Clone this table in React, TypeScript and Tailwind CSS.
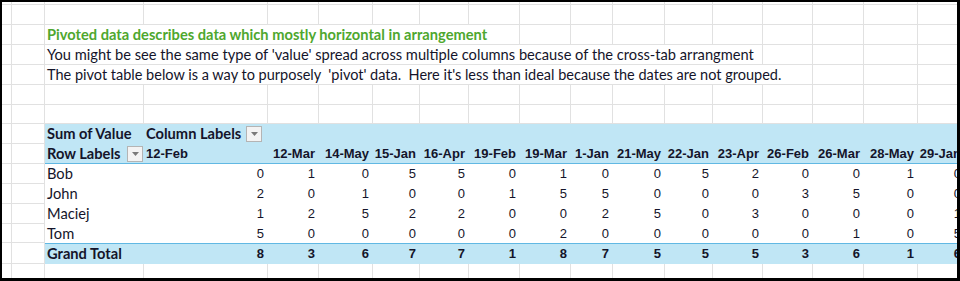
import React from "react";

const W = [10, 33, 99, 124, 51, 54, 47, 49, 51, 51, 42, 52, 48, 50, 50, 51, 54, 47];

const dates = ["12-Feb", "12-Mar", "14-May", "15-Jan", "16-Apr", "19-Feb", "19-Mar", "1-Jan", "21-May", "22-Jan", "23-Apr", "26-Feb", "26-Mar", "28-May", "29-Jan"];
const rows: [string, number[]][] = [
  ["Bob", [0, 1, 0, 5, 5, 0, 1, 0, 0, 5, 2, 0, 0, 1, 0]],
  ["John", [2, 0, 1, 0, 0, 1, 5, 5, 0, 0, 0, 3, 5, 0, 0]],
  ["Maciej", [1, 2, 5, 2, 2, 0, 0, 2, 5, 0, 3, 0, 0, 0, 1]],
  ["Tom", [5, 0, 0, 0, 0, 0, 2, 0, 0, 0, 0, 0, 1, 0, 5]],
];
const totals = [8, 3, 6, 7, 7, 1, 8, 7, 5, 5, 5, 3, 6, 1, 6];

const sumW = (a: number, b: number) => W.slice(a, b).reduce((s, x) => s + x, 0);

function GridCell({ w, h, children, className = "" }: { w: number; h: number; children?: React.ReactNode; className?: string }) {
  return (
    <div
      className={`shrink-0 border-r border-b border-[#e1e1e1] overflow-visible whitespace-pre ${className}`}
      style={{ width: w, height: h }}
    >
      {children}
    </div>
  );
}

function BlankRow({ h }: { h: number }) {
  return (
    <div className="flex">
      {W.map((w, i) => (
        <GridCell key={i} w={w} h={h} />
      ))}
    </div>
  );
}

function TextRow({ h, span, children, className = "" }: { h: number; span: number; children: React.ReactNode; className?: string }) {
  return (
    <div className="flex">
      <GridCell w={W[0]} h={h} />
      <GridCell w={W[1]} h={h} />
      <GridCell w={sumW(2, span)} h={h} className={`flex items-center pl-[2px] ${className}`}>
        {children}
      </GridCell>
      {W.slice(span).map((w, i) => (
        <GridCell key={i} w={w} h={h} />
      ))}
    </div>
  );
}

function Drop() {
  return (
    <div className="w-[16px] h-[16px] border border-[#b4b4b4] bg-[#f3f3f3] flex items-center justify-center shrink-0">
      <svg width="7" height="4" viewBox="0 0 7 4">
        <polygon points="0,0 7,0 3.5,4" fill="#7a7a7a" />
      </svg>
    </div>
  );
}

const lato = "font-['Lato','Liberation_Sans',sans-serif]";
const arial = "font-['Liberation_Sans','Arial',sans-serif]";

function PivotRow({
  h,
  bg,
  border,
  label,
  cells,
}: {
  h: number;
  bg: string;
  border?: string;
  label: React.ReactNode;
  cells: React.ReactNode[];
}) {
  return (
    <div className="flex">
      <GridCell w={W[0]} h={h} />
      <GridCell w={W[1]} h={h} />
      <div className={`flex shrink-0 ${bg} ${border ?? ""}`} style={{ height: h, width: sumW(2, W.length) }}>
        <div className="shrink-0 flex items-center pl-[2px]" style={{ width: W[2] }}>
          {label}
        </div>
        {cells.map((c, i) => (
          <div key={i} className="shrink-0 flex items-center" style={{ width: W[i + 3] }}>
            {c}
          </div>
        ))}
      </div>
    </div>
  );
}

export default function App() {
  return (
    <div className="w-[960px] h-[281px] bg-white border-t-[2px] border-l-[2px] border-r-[3px] border-b-[3px] border-black overflow-hidden text-[#14142a]">
      <BlankRow h={3} />
      <BlankRow h={20} />
      <TextRow h={20} span={9} className={`${lato} text-[14.67px] font-bold text-[#4ea72e]`}>
        Pivoted data describes data which mostly horizontal in arrangement
      </TextRow>
      <TextRow h={20} span={14} className={`${lato} text-[14.67px]`}>
        You might be see the same type of 'value' spread across multiple columns because of the cross-tab arrangment
      </TextRow>
      <TextRow h={20} span={15} className={`${lato} text-[14.5px]`}>
        {"The pivot table below is a way to purposely  'pivot' data.  Here it's less than ideal because the dates are not grouped."}
      </TextRow>
      <BlankRow h={20} />
      <BlankRow h={19} />
      <PivotRow
        h={20}
        bg="bg-[#c0e6f5]"
        label={<span className={`${lato} text-[14.67px] font-bold`}>Sum of Value</span>}
        cells={dates.map((_, i) =>
          i === 0 ? (
            <div className="flex items-center w-full pl-[2px] gap-[5px]">
              <span className={`${lato} text-[14.67px] font-bold`}>Column Labels</span>
              <Drop />
            </div>
          ) : null
        )}
      />
      <PivotRow
        h={20}
        bg="bg-[#c0e6f5]"
        border="border-b border-[#61b8e3]"
        label={
          <div className="flex items-center w-full pr-[1px] justify-between">
            <span className={`${lato} text-[14.67px] font-bold`}>Row Labels</span>
            <Drop />
          </div>
        }
        cells={dates.map((d, i) =>
          i === 0 ? (
            <span className={`${arial} text-[13px] font-bold pl-[2px]`}>{d}</span>
          ) : (
            <span className={`${arial} text-[13px] font-bold w-full text-right pr-[4px]`}>{d}</span>
          )
        )}
      />
      {rows.map(([name, vals], r) => (
        <PivotRow
          key={name}
          h={r === 3 ? 19 : 20}
          bg="bg-white"
          label={<span className={`${lato} text-[14.67px]`}>{name}</span>}
          cells={vals.map((v) => (
            <span className={`${arial} text-[13px] w-full text-right pr-[4px]`}>{v}</span>
          ))}
        />
      ))}
      <PivotRow
        h={21}
        bg="bg-[#c0e6f5]"
        border="border-t border-[#61b8e3]"
        label={<span className={`${lato} text-[14.67px] font-bold`}>Grand Total</span>}
        cells={totals.map((v) => (
          <span className={`${arial} text-[13px] font-bold w-full text-right pr-[4px]`}>{v}</span>
        ))}
      />
      <BlankRow h={20} />
    </div>
  );
}
